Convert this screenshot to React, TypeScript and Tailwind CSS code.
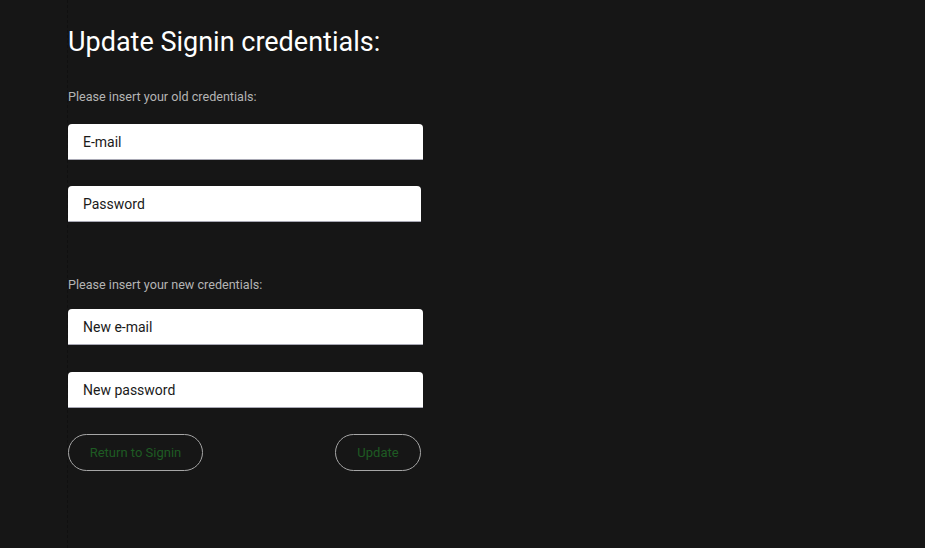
import React from 'react';

const Field: React.FC<{ placeholder: string; width: string; type?: string; className?: string }> = ({ placeholder, width, type = 'text', className = '' }) => (
  <input
    type={type}
    placeholder={placeholder}
    className={`${width} ${className} block h-[36px] bg-white rounded-t-[4px] border-b border-[#a8a8b4] pl-[15px] text-[14px] text-[#1a1a1a] placeholder-[#1a1a1a] outline-none`}
  />
);

const App: React.FC = () => {
  return (
    <div className="min-h-screen w-full bg-[#161616] pl-[67px] font-['Roboto',sans-serif]">
      <div className="min-h-screen border-l border-dashed border-[#101010] flex flex-col">
        <h1 className="pt-[26px] text-[27px] leading-[32px] text-white font-normal">Update Signin credentials:</h1>

        <p className="mt-[31px] text-[12.6px] leading-[16px] text-[#b4b4b4]">Please insert your old credentials:</p>
        <Field placeholder="E-mail" width="w-[355px]" className="mt-[19px]" />
        <Field placeholder="Password" width="w-[353px]" type="password" className="mt-[26px]" />

        <p className="mt-[55px] text-[12.6px] leading-[16px] text-[#b4b4b4]">Please insert your new credentials:</p>
        <Field placeholder="New e-mail" width="w-[355px]" className="mt-[16px]" />
        <Field placeholder="New password" width="w-[355px]" type="password" className="mt-[27px]" />

        <div className="mt-[26px] w-[355px] flex gap-[13px]">
          <div className="w-[164px]">
            <button className="h-[37px] w-[135px] rounded-full border border-[#a6a6a6] text-[13px] text-[#1e5b23]">
              Return to Signin
            </button>
          </div>
          <div className="flex-1 flex justify-end pr-[2px]">
            <button className="h-[37px] w-[86px] rounded-full border border-[#a6a6a6] text-[13px] text-[#1e5b23]">
              Update
            </button>
          </div>
        </div>
      </div>
    </div>
  );
};

export default App;
